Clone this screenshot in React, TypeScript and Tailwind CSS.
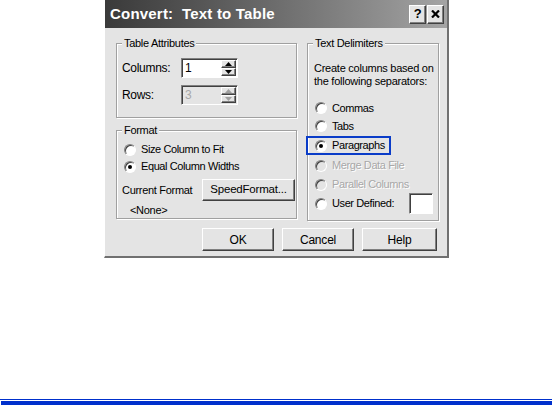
import React from "react";

const raised =
  "border border-t-white border-l-white border-r-[#404040] border-b-[#404040] shadow-[inset_-1px_-1px_0_#808080]";
const sunken =
  "border border-t-[#808080] border-l-[#808080] border-r-white border-b-white shadow-[inset_1px_1px_0_#404040]";

const Radio = ({ checked = false, disabled = false }: { checked?: boolean; disabled?: boolean }) => (
  <span
    className={`relative flex w-[12px] h-[12px] shrink-0 items-center justify-center rounded-full border border-t-[#808080] border-l-[#808080] border-r-white border-b-white shadow-[inset_1px_1px_0_#404040] ${
      disabled ? "bg-[#e4e4e4]" : "bg-white"
    }`}
  >
    {checked && <span className="w-[4px] h-[4px] rounded-full bg-black" />}
  </span>
);

const RadioRow = ({
  label,
  checked,
  disabled,
  className = "",
}: {
  label: string;
  checked?: boolean;
  disabled?: boolean;
  className?: string;
}) => (
  <div className={`flex items-center gap-[5px] text-[11px] tracking-[-0.4px] ${className}`}>
    <Radio checked={checked} disabled={disabled} />
    <span className={disabled ? "text-[#a8a8a8] [text-shadow:1px_1px_0_#fff]" : "text-black"}>{label}</span>
  </div>
);

const Group = ({ title, className = "", children }: { title: string; className?: string; children: React.ReactNode }) => (
  <div className={`relative border border-[#a0a0a0] shadow-[1px_1px_0_#fff,inset_1px_1px_0_#fff] ${className}`}>
    <span className="absolute -top-[8px] left-[5px] bg-[#e4e4e4] px-[2px] leading-[14px]">{title}</span>
    {children}
  </div>
);

const Arrow = ({ up, disabled }: { up?: boolean; disabled?: boolean }) => (
  <svg width="7" height="4" viewBox="0 0 7 4">
    <polygon points={up ? "3.5,0 7,4 0,4" : "0,0 7,0 3.5,4"} fill={disabled ? "#a0a0a0" : "#000"} />
  </svg>
);

const Spin = ({ value, disabled }: { value: string; disabled?: boolean }) => (
  <div className={`flex w-[57px] h-[20px] ${sunken} ${disabled ? "bg-[#e4e4e4]" : "bg-white"}`}>
    <span
      className={`flex-1 pl-[3px] leading-[18px] text-[12px] ${disabled ? "text-[#a8a8a8]" : "text-black"}`}
    >
      {value}
    </span>
    <div className="flex flex-col w-[16px] p-[1px] pl-0">
      <div className={`flex-1 flex items-center justify-center bg-[#e4e4e4] ${raised}`}>
        <Arrow up disabled={disabled} />
      </div>
      <div className={`flex-1 flex items-center justify-center bg-[#e4e4e4] ${raised}`}>
        <Arrow disabled={disabled} />
      </div>
    </div>
  </div>
);

const Btn = ({ label, className = "" }: { label: string; className?: string }) => (
  <div className={`flex items-center justify-center bg-[#e4e4e4] tracking-[-0.2px] ${raised} ${className}`}>
    {label}
  </div>
);

export default function App() {
  return (
    <div
      className="relative w-[552px] h-[405px] bg-white text-[11px] tracking-[-0.3px] whitespace-nowrap text-black"
      style={{ fontFamily: '"Liberation Sans", Arial, sans-serif' }}
    >
      <div className="ml-[104px] w-[345px] h-[258px] flex flex-col bg-[#e4e4e4] border-l border-l-white border-r-2 border-r-[#707070] border-b-2 border-b-[#707070]">
        {/* title bar */}
        <div className="h-[28px] flex items-center justify-between pl-[5px] pr-[3px] bg-linear-to-r from-[#3a3a3a] to-[#a4a4a4]">
          <span className="text-white font-bold text-[15px] tracking-[0.2px]">Convert:&nbsp; Text to Table</span>
          <div className="flex gap-[1px]">
            <div className={`w-[17px] h-[19px] flex items-center justify-center bg-[#e4e4e4] font-bold text-[13px] ${raised}`}>?</div>
            <div className={`w-[17px] h-[19px] flex items-center justify-center bg-[#e4e4e4] ${raised}`}>
              <svg width="9" height="8" viewBox="0 0 9 8">
                <path d="M1 0.5 L8 7.5 M8 0.5 L1 7.5" stroke="#000" strokeWidth="2.2" />
              </svg>
            </div>
          </div>
        </div>

        {/* body */}
        <div className="flex gap-[10px] pl-[11px] pt-[15px]">
          <div className="flex flex-col w-[181px]">
            <Group title="Table Attributes" className="h-[75px] pt-[14px] pl-[5px]">
              <div className="flex items-center h-[20px]">
                <span className="w-[59px] text-[12px]">Columns:</span>
                <Spin value="1" />
              </div>
              <div className="flex items-center h-[20px] mt-[7px]">
                <span className="w-[59px] text-[12px]">Rows:</span>
                <Spin value="3" disabled />
              </div>
            </Group>
            <Group title="Format" className="mt-[12px] h-[89px] pt-[10px] pl-[7px]">
              <RadioRow label="Size Column to Fit" className="h-[17px]" />
              <RadioRow label="Equal Column Widths" checked className="h-[17px]" />
              <div className="flex items-center mt-[4px] -ml-[2px]">
                <span className="w-[80px]">Current Format</span>
                <Btn label="SpeedFormat..." className="w-[93px] h-[22px] text-[11.5px]" />
              </div>
              <div className="mt-[1px] pl-[6px] h-[16px] leading-[16px]">&lt;None&gt;</div>
            </Group>
          </div>

          <Group title="Text Delimiters" className="w-[132px] h-[178px] pt-[18px] pl-[7px]">
            <div className="leading-[13px] tracking-[-0.25px] -ml-[1px]">
              Create columns based on
              <br />
              the following separators:
            </div>
            <div className="mt-[11px] flex flex-col">
              <RadioRow label="Commas" className="h-[18px]" />
              <RadioRow label="Tabs" className="h-[18px]" />
              <div className="-ml-[9px] mt-[1px] w-[85px] h-[19px] pl-[7px] border-2 border-[#0a3cc8] flex items-center">
                <RadioRow label="Paragraphs" checked />
              </div>
              <RadioRow label="Merge Data File" disabled className="h-[19px] mt-[1px]" />
              <RadioRow label="Parallel Columns" disabled className="h-[19px]" />
              <div className="flex items-center h-[19px]">
                <RadioRow label="User Defined:" />
                <div className={`ml-[15px] w-[24px] h-[21px] bg-white ${sunken}`} />
              </div>
            </div>
          </Group>
        </div>

        {/* buttons */}
        <div className="flex justify-end gap-[8px] pr-[10px] mt-[7px] text-[12px]">
          <Btn label="OK" className="w-[72px] h-[23px]" />
          <Btn label="Cancel" className="w-[72px] h-[23px]" />
          <Btn label="Help" className="w-[75px] h-[23px]" />
        </div>
      </div>

      <div className="absolute left-0 right-0 top-[399px] h-[1px] bg-[#0030cc]" />
      <div className="absolute left-[1px] right-0 top-[401px] h-[4px] bg-[#0030cc]" />
    </div>
  );
}
